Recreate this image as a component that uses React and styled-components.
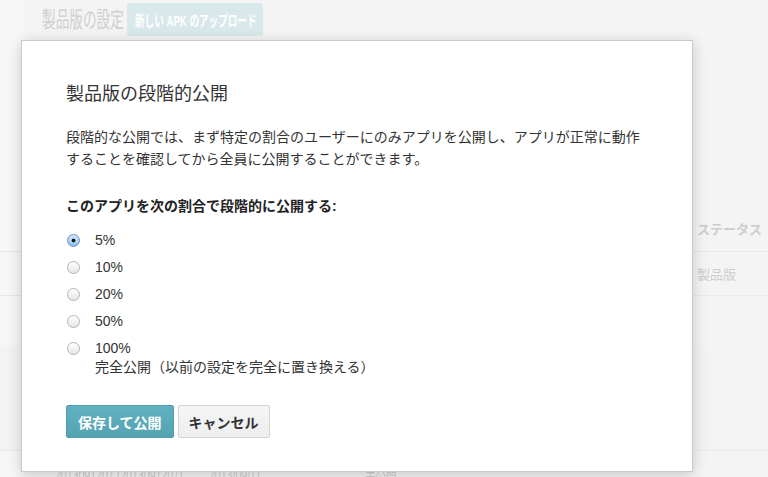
import React, { useState } from 'react'
import styled, { createGlobalStyle } from 'styled-components'

const GlobalStyle = createGlobalStyle`
  html, body {
    margin: 0;
    padding: 0;
    background: #f4f4f4;
    font-family: "Liberation Sans", "Noto Sans CJK JP", sans-serif;
  }
`

const options = [
  { value: '5', label: '5%' },
  { value: '10', label: '10%' },
  { value: '20', label: '20%' },
  { value: '50', label: '50%' },
  { value: '100', label: '100%', note: '完全公開（以前の設定を完全に置き換える）' },
]

export default function App() {
  const [rate, setRate] = useState('5')

  return (
    <Page>
      <GlobalStyle />
      <Header>
        <PageTitle>製品版の設定</PageTitle>
        <UploadBtn>
          <span>新しい APK のアップロード</span>
        </UploadBtn>
      </Header>

      <Table>
        <Row height={46} bordered>
          <Cell />
          <Cell />
          <Cell />
          <Cell bold>ステータス</Cell>
        </Row>
        <Row height={44} bordered>
          <Cell />
          <Cell />
          <Cell />
          <Cell>製品版</Cell>
        </Row>
        <Row height={49} />
        <Row height={106} bordered tint />
        <Row height={44}>
          <Cell condensed>2013091207 (2013091207)</Cell>
          <Cell condensed>2013/09/11</Cell>
          <Cell condensed>未公開</Cell>
          <Cell />
        </Row>
      </Table>

      <Modal>
        <ModalTitle>製品版の段階的公開</ModalTitle>
        <Description>
          段階的な公開では、まず特定の割合のユーザーにのみアプリを公開し、アプリが正常に動作
          <br />
          することを確認してから全員に公開することができます。
        </Description>
        <Label>このアプリを次の割合で段階的に公開する:</Label>
        <OptionList>
          {options.map((o) => (
            <Option key={o.value}>
              <Radio
                type="radio"
                name="rate"
                value={o.value}
                checked={rate === o.value}
                onChange={() => setRate(o.value)}
              />
              <OptionText>
                <span>{o.label}</span>
                {o.note && <Note>{o.note}</Note>}
              </OptionText>
            </Option>
          ))}
        </OptionList>
        <Actions>
          <Button primary>保存して公開</Button>
          <Button>キャンセル</Button>
        </Actions>
      </Modal>
    </Page>
  )
}

const Page = styled.div`
  position: relative;
  width: 768px;
  height: 477px;
  overflow: hidden;
  background: linear-gradient(to right, #f7f7f7 24px, #f4f4f4 24px);
`

const Header = styled.div`
  display: flex;
  align-items: center;
  height: 40px;
  padding-left: 42px;
  gap: 5px;
`

const PageTitle = styled.div`
  width: 80px;
  font-size: 22px;
  line-height: 40px;
  color: #cfcfcf;
  white-space: nowrap;
  transform: scaleX(0.62);
  transform-origin: left center;
`

const UploadBtn = styled.div`
  width: 136px;
  height: 33px;
  margin-top: -2px;
  border-radius: 3px;
  background: #d9e8eb;
  display: flex;
  align-items: center;
  padding-left: 8px;
  box-sizing: border-box;
  overflow: hidden;

  span {
    display: inline-block;
    font-size: 15px;
    font-weight: bold;
    color: #ffffff;
    white-space: nowrap;
    transform: scaleX(0.64);
    transform-origin: left center;
  }
`

const Table = styled.div`
  margin-top: 166px;
`

const Row = styled.div`
  display: grid;
  grid-template-columns: 154px 156px 332px 1fr;
  align-items: center;
  padding-left: 55px;
  height: ${(p) => p.height}px;
  box-sizing: border-box;
  border-bottom: ${(p) => (p.bordered ? '1px solid #e9e9e9' : 'none')};
  background: ${(p) => (p.tint ? '#f3f3f3' : 'transparent')};
`

const Cell = styled.div`
  font-size: ${(p) => (p.condensed ? '16px' : '13px')};
  font-weight: ${(p) => (p.bold ? 'bold' : 'normal')};
  color: #cdcdcd;
  white-space: nowrap;
  transform: ${(p) => (p.condensed ? 'scaleX(0.66)' : 'none')};
  transform-origin: left center;
  margin-top: ${(p) => (p.condensed ? '6px' : '0')};
`

const Modal = styled.div`
  position: absolute;
  left: 21px;
  top: 40px;
  width: 672px;
  box-sizing: border-box;
  padding: 40px 44px 33px;
  background: #ffffff;
  border: 1px solid #c9c9c9;
  box-shadow: 0 3px 14px rgba(0, 0, 0, 0.18);
  color: #333333;
`

const ModalTitle = styled.h2`
  margin: 0;
  font-size: 18px;
  font-weight: normal;
  line-height: 26px;
  color: #333333;
`

const Description = styled.p`
  margin: 19px 0 0;
  font-size: 14px;
  line-height: 22px;
`

const Label = styled.div`
  margin-top: 26px;
  font-size: 14px;
  font-weight: bold;
  line-height: 20px;
  color: #222222;
`

const OptionList = styled.div`
  margin-top: 11px;
  display: flex;
  flex-direction: column;
`

const Option = styled.label`
  display: flex;
  align-items: flex-start;
  gap: 15px;
  min-height: 27px;
  font-size: 14px;
  cursor: pointer;
`

const Radio = styled.input`
  appearance: none;
  margin: 7px 0 0 1px;
  width: 13px;
  height: 13px;
  border-radius: 50%;
  border: 1px solid #b3b3b3;
  background: linear-gradient(#ffffff, #e6e6e6);
  box-sizing: border-box;
  flex-shrink: 0;

  &:checked {
    border-color: #6d92c2;
    background: radial-gradient(circle at center, #111 0 1.6px, transparent 2.2px),
      linear-gradient(#d6e8fb, #8dbbee);
  }
`

const OptionText = styled.div`
  display: flex;
  flex-direction: column;
  line-height: 27px;
`

const Note = styled.span`
  line-height: 19px;
  margin-top: -4px;
`

const Actions = styled.div`
  display: flex;
  gap: 4px;
  margin-top: 28px;
`

const Button = styled.button`
  height: 33px;
  padding: 0 ${(p) => (p.primary ? '11px' : '10px')};
  border-radius: 2px;
  font-family: inherit;
  font-size: 14px;
  font-weight: bold;
  cursor: pointer;
  color: ${(p) => (p.primary ? '#ffffff' : '#333333')};
  border: 1px solid ${(p) => (p.primary ? '#4f9dac' : '#d4d4d4')};
  background: ${(p) =>
    p.primary ? 'linear-gradient(#61b1c0, #55a3b2)' : 'linear-gradient(#f5f5f5, #eeeeee)'};
`
